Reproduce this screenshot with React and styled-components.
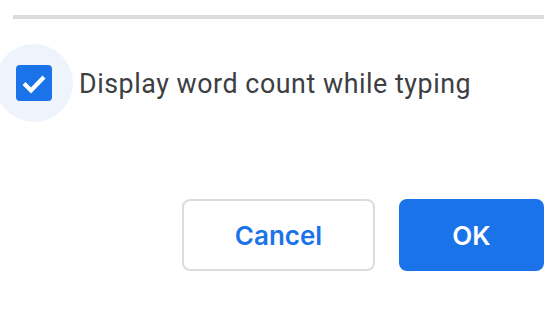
import React from "react";
import styled, { createGlobalStyle } from "styled-components";

const GlobalStyle = createGlobalStyle`
  html, body {
    margin: 0;
    padding: 0;
    background: #ffffff;
    overflow: hidden;
  }
`;

const Page = styled.div`
  width: 553px;
  height: 311px;
  box-sizing: border-box;
  padding: 15px 9px 0 13px;
  display: flex;
  flex-direction: column;
  font-family: Roboto, "Liberation Sans", sans-serif;
`;

const Divider = styled.div`
  height: 4px;
  background: #dadce0;
`;

const OptionRow = styled.label`
  display: flex;
  align-items: center;
  gap: 27px;
  margin-top: 46px;
  padding-left: 3px;
  cursor: pointer;
`;

const CheckWrap = styled.span`
  position: relative;
  width: 36px;
  height: 36px;
  flex: none;

  &::before {
    content: "";
    position: absolute;
    left: -21px;
    top: -21px;
    width: 78px;
    height: 78px;
    border-radius: 50%;
    background: #eef3fc;
  }
`;

const CheckBox = styled.span`
  position: relative;
  display: flex;
  align-items: center;
  justify-content: center;
  width: 36px;
  height: 36px;
  border-radius: 4px;
  background: ${(p) => (p.checked ? "#1a73e8" : "#fff")};
`;

const OptionText = styled.span`
  font-size: 26.8px;
  color: #3c4043;
  letter-spacing: 0.55px;
  margin-top: 2px;
`;

const ButtonRow = styled.div`
  display: flex;
  justify-content: flex-end;
  gap: 24px;
  margin-top: 98px;
`;

const Button = styled.button`
  height: 72px;
  box-sizing: border-box;
  border-radius: 8px;
  font-family: Inter, Roboto, sans-serif;
  font-weight: 600;
  font-size: 26px;
  padding: 0;
  cursor: pointer;
  width: ${(p) => p.width}px;
  border: ${(p) => (p.primary ? "none" : "2px solid #dadce0")};
  background: ${(p) => (p.primary ? "#1a73e8" : "#ffffff")};
  color: ${(p) => (p.primary ? "#ffffff" : "#1a73e8")};
`;

export default function App() {
  return (
    <>
      <GlobalStyle />
      <Page>
        <Divider />
        <OptionRow>
          <CheckWrap>
            <CheckBox checked>
              <svg width="36" height="36" viewBox="0 0 36 36">
                <polyline
                  points="8,18.5 15,25.5 28,12"
                  fill="none"
                  stroke="#fff"
                  strokeWidth="4.2"
                />
              </svg>
            </CheckBox>
          </CheckWrap>
          <OptionText>Display word count while typing</OptionText>
        </OptionRow>
        <ButtonRow>
          <Button width={193}>Cancel</Button>
          <Button primary width={145}>OK</Button>
        </ButtonRow>
      </Page>
    </>
  );
}
